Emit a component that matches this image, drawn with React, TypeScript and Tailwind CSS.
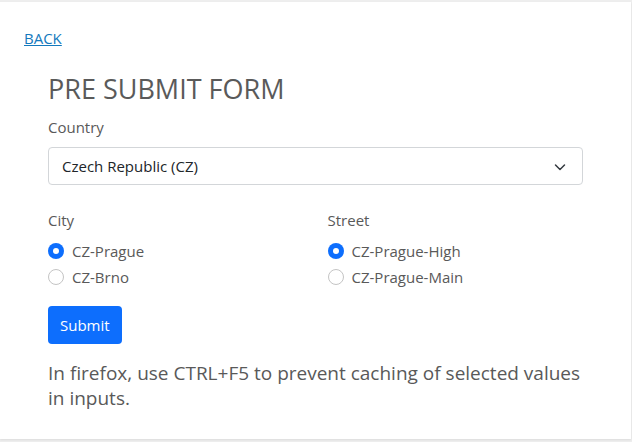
import React from "react";

function Radio({ label, checked }: { label: string; checked?: boolean }) {
  return (
    <div className="flex h-[26px] items-center gap-2">
      <span
        className={
          checked
            ? "flex h-4 w-4 items-center justify-center rounded-full bg-[#0d6efd]"
            : "h-4 w-4 rounded-full border border-[#c4c4c4] bg-white"
        }
      >
        {checked && <span className="h-[6px] w-[6px] rounded-full bg-white" />}
      </span>
      <span>{label}</span>
    </div>
  );
}

export default function App() {
  return (
    <div
      className="h-[442px] bg-[#eeeeee] pt-[2px] pr-[1px] text-[#595959]"
      style={{ fontFamily: '"Open Sans", "Noto Sans", sans-serif' }}
    >
      <div className="h-[437px] bg-white px-6 pt-6 text-[15px] leading-6 shadow-[0_1px_2px_rgba(0,0,0,0.08)]">
        <a href="#" className="text-[#1479bd] underline">
          BACK
        </a>

        <div className="mt-[22px] px-6">
          <h3 className="text-[27px] leading-[34px] text-[#5a5a5a]">PRE SUBMIT FORM</h3>

          <label className="mt-[9px] block">Country</label>
          <div className="mt-2 flex h-[38px] items-center justify-between rounded-[4px] border border-[#d3d6d9] pr-4 pl-[13px] text-[#212529]">
            <span>Czech Republic (CZ)</span>
            <svg width="12" height="9" viewBox="0 0 16 12" fill="none">
              <path d="M2 4l6 6 6-6" stroke="#343a40" strokeWidth="2" strokeLinecap="round" strokeLinejoin="round" />
            </svg>
          </div>

          <div className="mt-[23px] grid grid-cols-2 gap-x-6">
            <div>
              <div className="mb-[6px]">City</div>
              <Radio label="CZ-Prague" checked />
              <Radio label="CZ-Brno" />
            </div>
            <div>
              <div className="mb-[6px]">Street</div>
              <Radio label="CZ-Prague-High" checked />
              <Radio label="CZ-Prague-Main" />
            </div>
          </div>

          <button className="mt-4 h-[38px] rounded-[4px] bg-[#0d6efd] px-3 text-white">
            Submit
          </button>

          <p className="mt-[17px] text-[19px] leading-[25px]">
            In firefox, use CTRL+F5 to prevent caching of selected values in inputs.
          </p>
        </div>
      </div>
    </div>
  );
}
